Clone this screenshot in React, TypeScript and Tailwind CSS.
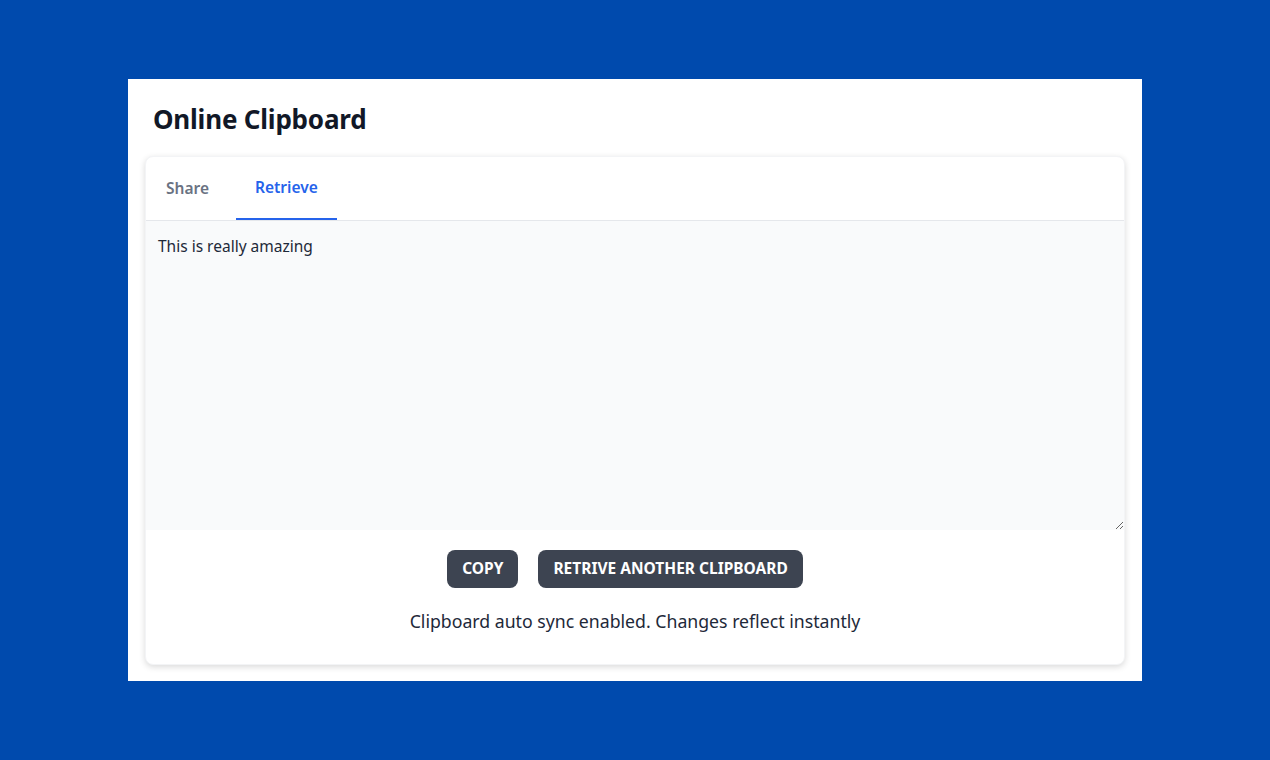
export default function App() {
  return (
    <div
      className="min-h-screen w-full bg-[#004aad] flex justify-center pt-[79px]"
      style={{ fontFamily: '"Noto Sans", "Open Sans", sans-serif' }}
    >
      <div className="w-[1014px] h-[602px] bg-white px-[17px] pt-[22px]">
        <h1 className="text-[26px] font-bold text-[#111827] leading-[36px] pl-[8px] tracking-[-0.2px]">
          Online Clipboard
        </h1>
        <div className="mt-[19px] rounded-lg bg-white shadow-[0_2px_6px_rgba(0,0,0,0.15)] border border-gray-100 overflow-hidden">
          <div className="flex gap-[7px] h-[64px] border-b border-gray-200">
            <button className="px-5 text-[15.5px] font-semibold text-gray-500">Share</button>
            <button className="px-[19px] text-[15.5px] font-semibold text-[#2563eb] border-b-2 border-[#2563eb]">
              Retrieve
            </button>
          </div>
          <textarea
            className="block w-full h-[309px] bg-[#f9fafb] px-3 py-[14px] text-[15.5px] text-gray-800 outline-none resize-y"
            defaultValue="This is really amazing"
          />
          <div className="flex justify-center gap-5 pt-5 pr-5">
            <button className="h-[38px] px-[15px] rounded-lg bg-[#3d4451] text-white text-[15.5px] font-bold">
              COPY
            </button>
            <button className="h-[38px] px-[15px] rounded-lg bg-[#3d4451] text-white text-[15.5px] font-bold">
              RETRIVE ANOTHER CLIPBOARD
            </button>
          </div>
          <p className="text-center text-[17.7px] text-gray-800 mt-[20px] pb-[29px]">
            Clipboard auto sync enabled. Changes reflect instantly
          </p>
        </div>
      </div>
    </div>
  );
}
